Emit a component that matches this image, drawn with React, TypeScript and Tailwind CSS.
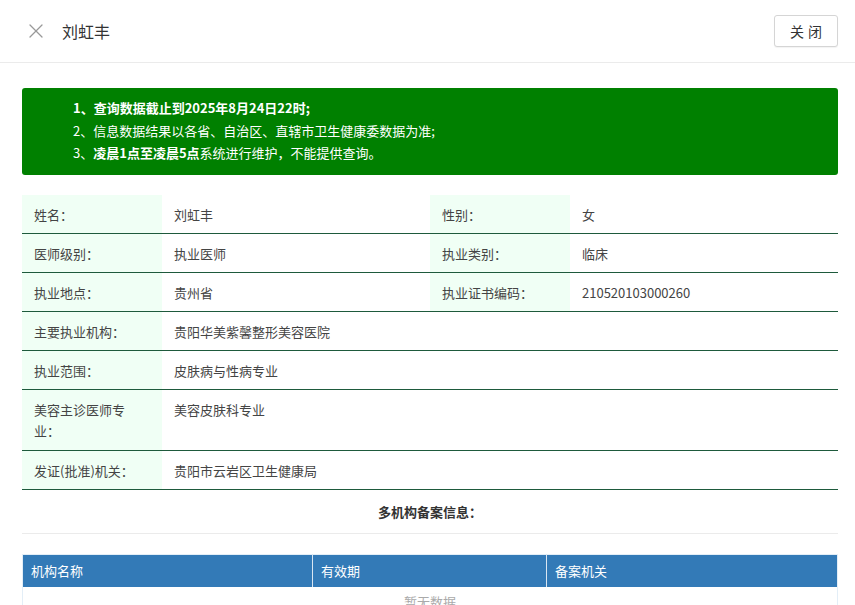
import { X } from "lucide-react";

const font = {
  fontFamily: '"Microsoft YaHei", "Noto Sans CJK SC", "Noto Sans", sans-serif',
};

type Row = { label: string; value: string; label2?: string; value2?: string; tall?: boolean };

const rows: Row[] = [
  { label: "姓名：", value: "刘虹丰", label2: "性别：", value2: "女" },
  { label: "医师级别：", value: "执业医师", label2: "执业类别：", value2: "临床" },
  { label: "执业地点：", value: "贵州省", label2: "执业证书编码：", value2: "210520103000260" },
  { label: "主要执业机构：", value: "贵阳华美紫馨整形美容医院" },
  { label: "执业范围：", value: "皮肤病与性病专业" },
  { label: "美容主诊医师专业：", value: "美容皮肤科专业", tall: true },
  { label: "发证(批准)机关：", value: "贵阳市云岩区卫生健康局" },
];

export default function App() {
  return (
    <div className="min-h-screen bg-white text-[#333]" style={font}>
      {/* Header */}
      <div className="h-[63px] flex items-center border-b border-[#ebebeb] pl-[24px] pr-[17px]">
        <X className="w-[24px] h-[24px] text-[#999]" strokeWidth={1.3} />
        <span className="ml-[14px] text-[16px] text-[#333]">刘虹丰</span>
        <button className="ml-auto w-[64px] h-[32px] border border-[#d5d5d5] rounded-[3px] text-[14px] text-[#333] tracking-[4px] pl-[4px] bg-white shadow-[0_1px_1px_rgba(0,0,0,0.05)]">
          关闭
        </button>
      </div>

      <div className="pl-[22px] pr-[17px]">
        {/* Notice */}
        <div className="mt-[25px] bg-[#008000] rounded-[3px] text-white text-[13px] leading-[22.5px] pl-[51px] pt-[9px] pb-[10px]">
          <p className="font-bold">1、查询数据截止到2025年8月24日22时;</p>
          <p>2、信息数据结果以各省、自治区、直辖市卫生健康委数据为准;</p>
          <p>
            3、<span className="font-bold">凌晨1点至凌晨5点</span>系统进行维护，不能提供查询。
          </p>
        </div>

        {/* Info table */}
        <table className="mt-[20px] w-full border-collapse text-[13px] leading-[21px] table-fixed">
          <colgroup>
            <col className="w-[140px]" />
            <col className="w-[268px]" />
            <col className="w-[140px]" />
            <col />
          </colgroup>
          <tbody>
            {rows.map((r) => {
              const pad = r.tall ? "pt-[9px] pb-[9px]" : "pt-[9px] pb-[8px]";
              return (
                <tr key={r.label} className="border-b border-[#1e5a3c] align-top">
                  <td className={`bg-[#f0fff5] pl-[12px] pr-[12px] text-[#444] ${pad}`}>{r.label}</td>
                  {r.label2 ? (
                    <>
                      <td className={`pl-[12px] text-[#444] ${pad}`}>{r.value}</td>
                      <td className={`bg-[#f0fff5] pl-[12px] text-[#444] ${pad}`}>{r.label2}</td>
                      <td className={`pl-[12px] text-[#444] ${pad}`}>{r.value2}</td>
                    </>
                  ) : (
                    <td colSpan={3} className={`pl-[12px] text-[#444] ${pad}`}>
                      {r.value}
                    </td>
                  )}
                </tr>
              );
            })}
          </tbody>
        </table>

        <div className="text-center text-[13px] font-bold leading-[21px] pt-[11px] pb-[11px] border-b border-[#ebebeb] text-[#333]">
          多机构备案信息：
        </div>

        {/* Multi org table */}
        <table className="mt-[20px] w-full border-collapse text-[13px] table-fixed border border-[#e3eef7]">
          <colgroup>
            <col className="w-[290px]" />
            <col className="w-[234px]" />
            <col />
          </colgroup>
          <thead>
            <tr className="bg-[#337ab7] text-white h-[33px]">
              <th className="text-left font-normal px-[8px] border-r border-[#d9e6f2]">机构名称</th>
              <th className="text-left font-normal px-[8px] border-r border-[#d9e6f2]">有效期</th>
              <th className="text-left font-normal px-[8px]">备案机关</th>
            </tr>
          </thead>
          <tbody>
            <tr>
              <td colSpan={3} className="text-center text-[#aaa] h-[30px]">
                暂无数据
              </td>
            </tr>
          </tbody>
        </table>
      </div>
    </div>
  );
}
